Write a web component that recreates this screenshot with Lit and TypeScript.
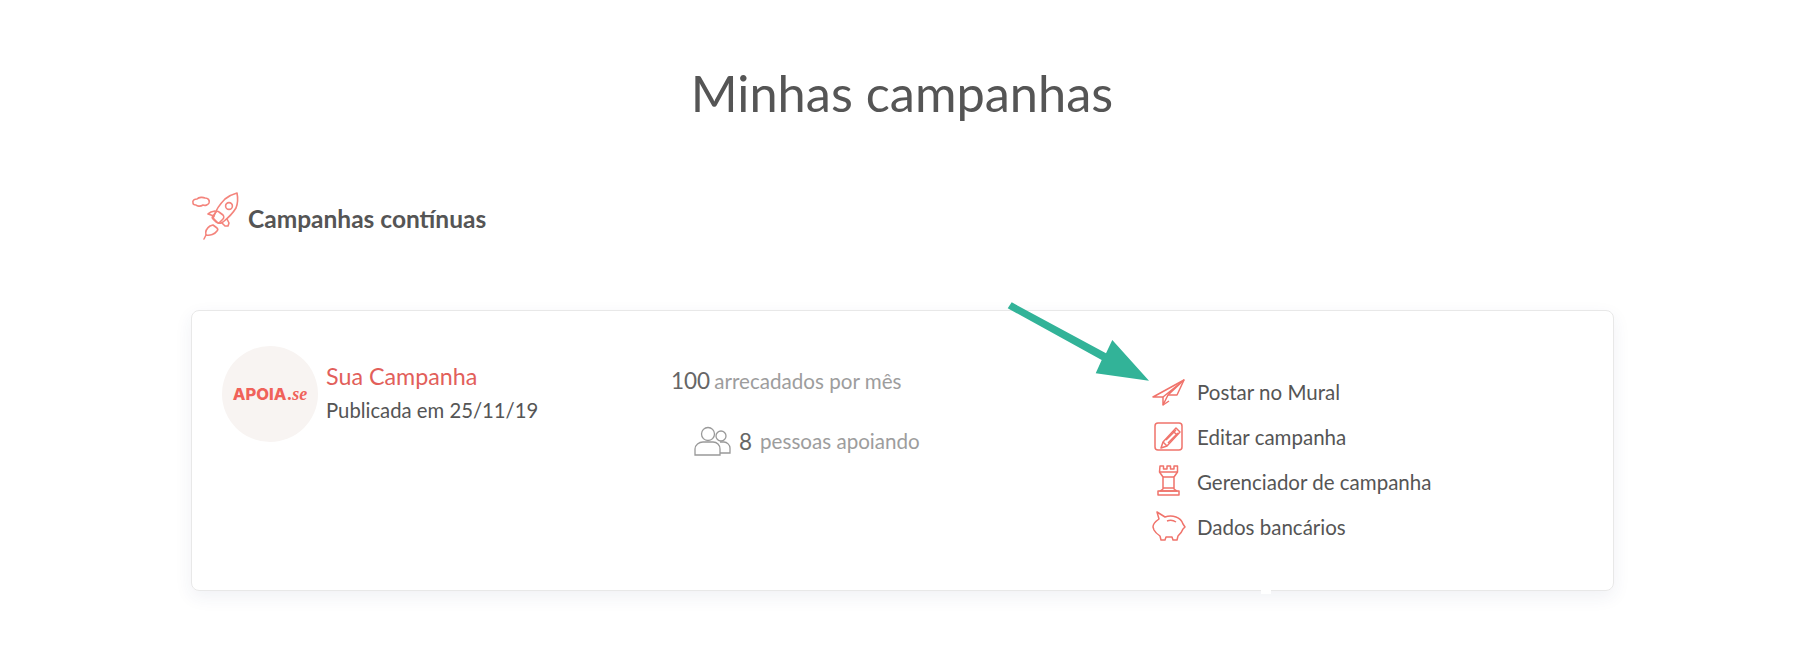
import { LitElement, html, css, svg } from "lit";
import { customElement } from "lit/decorators.js";

const rocket = html`<svg class="rocket" viewBox="0 0 50 50" fill="none" stroke="#f4847c" stroke-width="1.6" stroke-linejoin="round" stroke-linecap="round">
  <path d="M2 12c-1-3 2-4 4-4 2-2 6-2 8-1 3 0 5 2 4 5-1 2-4 3-6 2-3 2-6 1-7 0-2 0-3-1-3-2z"/>
  <path d="M46 2c-4 1-8 3-12 6-5 5-9 11-11 17-1 1-1 2 0 3l4 4c2 1 3 0 5-1 5-4 10-9 13-14 2-5 2-10 1-15z"/>
  <path d="M24 20l-4 1-3 2 6 2"/><path d="M36 28l2 4-1 3-3 0-3-3"/>
  <circle cx="38" cy="15" r="3.4"/>
  <path d="M28 21l4 3c1 1 1 3 0 4l-3 3c-1 1-3 1-4 0l-3-3c-1-1-1-2 0-3l3-4c1-1 2-1 3 0z"/>
  <path d="M22 34l-3 1c-3 2-5 5-4 9 4 1 9-1 11-4 1-1 1-2 0-3z"/>
  <path d="M15 44l-2 4"/>
</svg>`;

const plane = svg`<path d="M32 5L1 22h10l0 8 5-10h9z"/><path d="M11 22L32 5M16 20L32 5M11 30l6-4"/>`;
const edit = svg`<rect x="3" y="3" width="27" height="27" rx="3"/><path d="M24 8l4 4-13 14-6 2 2-6z"/><path d="M11 22l4 4M21 11l4 4M14 20l10-10M16 23l10-10"/>`;
const rook = svg`<path d="M8 1h3.500v3h3.500V1h3.500v3H22V1h3.500v6L22 12v12l3 2H8l3-2V12L7.500 7z"/><path d="M8 7h17M11 12h11M11 23h11M6 26h21v4H6z"/>`;
const piggy = svg`<path d="M5 2l8 5c3-1 8-1 11 0 3 1 6 4 7 7l2 3-2 2c-1 3-3 5-5 7l-1 4h-4l-1-3h-6l-1 3H9l-1-4c-3-2-5-4-6-6l-1-3c0-3 3-6 6-8z"/><path d="M15 11c3-1 6-1 9 1" />`;

const actions = [
  ["Postar no Mural", plane],
  ["Editar campanha", edit],
  ["Gerenciador de campanha", rook],
  ["Dados bancários", piggy],
] as const;

@customElement("app-root")
export class AppRoot extends LitElement {
  static styles = css`
    :host {
      display: block;
      position: relative;
      height: 655px;
      overflow: hidden;
      background: #fff;
      color: #555;
      font-family: "Lato", "Open Sans", sans-serif;
    }
    h1 {
      margin: 0;
      padding-top: 61px;
      padding-left: 4px;
      text-align: center;
      font-size: 50.500px;
      line-height: 64px;
      font-weight: 400;
      color: #555;
    }
    .wrap {
      margin-left: 191px;
      width: 1423px;
    }
    .section {
      display: flex;
      align-items: center;
      gap: 7px;
      margin-top: 66px;
      height: 50px;
    }
    .rocket { width: 50px; height: 50px; flex: none; }
    h2 {
      margin: 4px 0 0;
      font-size: 24.500px;
      font-weight: 700;
      color: #555;
    }
    .card {
      position: relative;
      box-sizing: border-box;
      margin-top: 69px;
      height: 281px;
      border: 1px solid #e8e8e8;
      border-radius: 8px;
      box-shadow: 0 6px 18px rgba(40, 60, 110, 0.07);
      padding: 35px 0 0 30px;
      display: grid;
      grid-template-columns: 449px 481px 1fr;
    }
    .card::after {
      content: "";
      position: absolute;
      left: 1069px;
      bottom: -4px;
      width: 10px;
      height: 5px;
      background: #fff;
    }
    .camp { display: flex; gap: 8px; }
    .avatar {
      width: 96px;
      height: 96px;
      border-radius: 50%;
      background: #f8f4f2;
      display: flex;
      align-items: center;
      justify-content: center;
      color: #f0625a;
      font: 800 16.500px "Inter", sans-serif;
      flex: none;
    }
    .avatar i { font: italic 700 18px "Liberation Serif", serif; }
    .name { margin-top: 16px; font-size: 23.300px; line-height: 28px; color: #e25f5b; }
    .pub { margin-top: 8px; font-size: 20.300px; line-height: 24px; color: #555; }
    .stats { padding-top: 17px; }
    .num { font-size: 22.500px; color: #666; }
    .lbl { font-size: 20.600px; color: #9d9d9d; }
    .raised { line-height: 36px; }
    .people {
      display: flex;
      align-items: center;
      gap: 8px;
      margin: 22px 0 0 22px;
      height: 36px;
    }
    .people svg { width: 38px; height: 30px; flex: none; }
    .acts { padding-top: 28px; display: flex; flex-direction: column; gap: 9px; }
    .act {
      display: flex;
      align-items: center;
      gap: 10px;
      height: 36px;
      font-size: 20.500px;
      color: #555;
    }
    .act svg {
      width: 35px;
      height: 34px;
      flex: none;
      fill: none;
      stroke: #f0736b;
      stroke-width: 1.500;
      stroke-linejoin: round;
    }
    .arrow {
      position: absolute;
      left: 1000px;
      top: 295px;
      width: 160px;
      height: 100px;
    }
  `;

  render() {
    return html`
      <h1>Minhas campanhas</h1>
      <div class="wrap">
        <div class="section">${rocket}<h2>Campanhas contínuas</h2></div>
        <div class="card">
          <div class="camp">
            <div class="avatar"><span>APOIA.<i>se</i></span></div>
            <div>
              <div class="name">Sua Campanha</div>
              <div class="pub">Publicada em 25/11/19</div>
            </div>
          </div>
          <div class="stats">
            <div class="raised"><span class="num">100</span> <span class="lbl">arrecadados por mês</span></div>
            <div class="people">
              <svg viewBox="0 0 38 30" fill="none" stroke="#999" stroke-width="1.300">
                <circle cx="15" cy="8" r="6.500"/>
                <path d="M2 29v-6c0-4 4-7 8-7h10c4 0 7 3 7 7v6z"/>
                <circle cx="28" cy="10" r="5"/>
                <path d="M27 16h4c3 0 6 3 6 6v5H27"/>
              </svg>
              <span class="num">8</span><span class="lbl">pessoas apoiando</span>
            </div>
          </div>
          <div class="acts">
            ${actions.map(([t, i]) => html`<div class="act"><svg viewBox="0 0 35 34">${i}</svg><span>${t}</span></div>`)}
          </div>
        </div>
      </div>
      <svg class="arrow" viewBox="0 0 160 100">
        <path fill="#32b398" d="M11.700 7.300L106 58.300 112.300 45 149 85.700 95.700 78.300 101.700 65 7.700 13.300z"/>
      </svg>
    `;
  }
}
